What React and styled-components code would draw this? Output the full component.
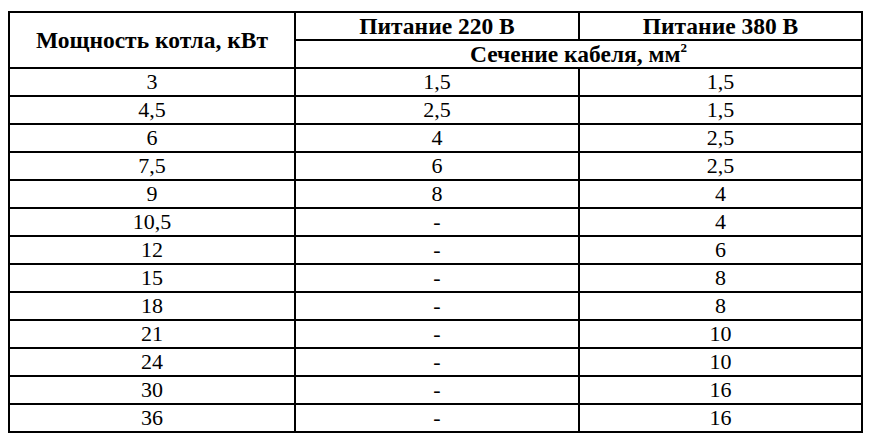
import React from 'react';
import styled, { createGlobalStyle } from 'styled-components';

const GlobalStyle = createGlobalStyle`
  html, body {
    margin: 0;
    padding: 0;
    background: #ffffff;
  }
`;

const rows = [
  ['3', '1,5', '1,5'],
  ['4,5', '2,5', '1,5'],
  ['6', '4', '2,5'],
  ['7,5', '6', '2,5'],
  ['9', '8', '4'],
  ['10,5', '-', '4'],
  ['12', '-', '6'],
  ['15', '-', '8'],
  ['18', '-', '8'],
  ['21', '-', '10'],
  ['24', '-', '10'],
  ['30', '-', '16'],
  ['36', '-', '16'],
];

const Page = styled.div`
  padding: 11px 0 0 8px;
  width: 872px;
  height: 440px;
  box-sizing: border-box;
  overflow: hidden;
`;

const Table = styled.table`
  width: 855px;
  border-collapse: collapse;
  table-layout: fixed;
  font-family: 'Liberation Serif', 'Times New Roman', serif;
  color: #000;
`;

const Head = styled.th`
  border: 2px solid #000;
  height: 26px;
  padding: 0;
  font-size: 23.5px;
  font-weight: bold;
  line-height: 24px;
  text-align: center;
  vertical-align: middle;
`;

const Cell = styled.td`
  border: 2px solid #000;
  height: 26px;
  padding: 0;
  font-size: 22px;
  line-height: 24px;
  text-align: center;
  vertical-align: middle;
`;

const Sup = styled.sup`
  font-size: 13px;
  vertical-align: 10px;
  line-height: 0;
`;

export default function App() {
  return (
    <>
      <GlobalStyle />
      <Page>
        <Table>
          <colgroup>
            <col style={{ width: 286 }} />
            <col style={{ width: 284 }} />
            <col />
          </colgroup>
          <thead>
            <tr>
              <Head rowSpan={2}>Мощность котла, кВт</Head>
              <Head>Питание 220 В</Head>
              <Head>Питание 380 В</Head>
            </tr>
            <tr>
              <Head colSpan={2}>
                Сечение кабеля, мм<Sup>2</Sup>
              </Head>
            </tr>
          </thead>
          <tbody>
            {rows.map((r) => (
              <tr key={r[0]}>
                {r.map((v, i) => (
                  <Cell key={i}>{v}</Cell>
                ))}
              </tr>
            ))}
          </tbody>
        </Table>
      </Page>
    </>
  );
}
